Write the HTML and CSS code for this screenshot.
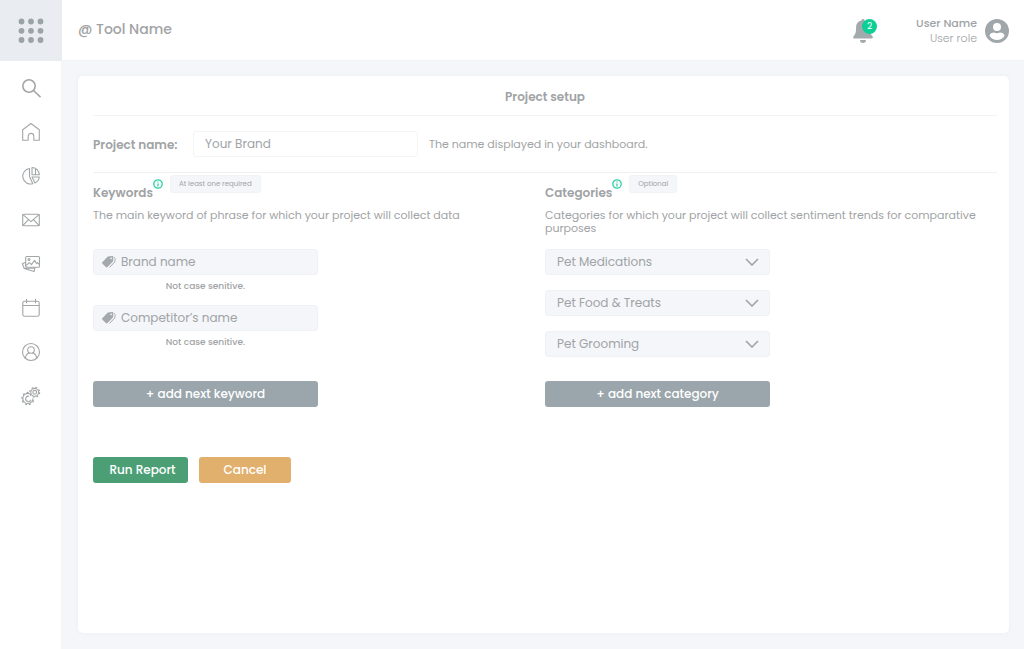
FILE: index.html
```html
<!DOCTYPE html>
<html lang="en">
<head>
<meta charset="utf-8">
<meta name="viewport" content="width=device-width, initial-scale=1">
<title>Project setup</title>
<link rel="stylesheet" href="styles.css">
</head>
<body>
<div class="app">
  <aside class="sidebar">
    <button class="apps" type="button" aria-label="Applications">
      <svg width="26" height="26" viewBox="0 0 26 26" fill="currentColor"><circle cx="3.5" cy="3.5" r="2.9"/><circle cx="13" cy="3.5" r="2.9"/><circle cx="22.500" cy="3.5" r="2.9"/><circle cx="3.5" cy="12.800" r="2.9"/><circle cx="13" cy="12.800" r="2.9"/><circle cx="22.500" cy="12.800" r="2.9"/><circle cx="3.500" cy="22" r="2.9"/><circle cx="13" cy="22" r="2.9"/><circle cx="22.500" cy="22" r="2.9"/></svg>
    </button>
    <nav class="nav" aria-label="Main">
      <a class="nav-link" href="#search" aria-label="Search"><svg class="bold" viewBox="0 0 20 20"><circle cx="8" cy="8" r="6.200"/><path d="M12.500 12.500 19 18.700"/></svg></a>
      <a class="nav-link" href="#home" aria-label="Home"><svg viewBox="0 0 20 20"><path d="M1.700 7.800 10 1.500l8.300 6.300v10.400h-5.500v-4a2.800 2.800 0 0 0-5.600 0v4H1.700z"/></svg></a>
      <a class="nav-link" href="#reports" aria-label="Reports"><svg viewBox="0 0 20 20"><path d="M8.500 2.500a7.800 7.800 0 1 0 3.300 15.200L8.500 10.600z"/><path d="M11 1.500v7.300h7.300A7.400 7.400 0 0 0 11 1.500zM11 11h7.300a7.500 7.500 0 0 1-4.300 6zM14.500 2.800v6"/></svg></a>
      <a class="nav-link" href="#mail" aria-label="Mail"><svg viewBox="0 0 20 20"><rect x="1.700" y="4.300" width="16.600" height="11.400" rx="1"/><path d="m2 4.700 8 7 8-7M2 15.400l5.500-5.700M18 15.400l-5.500-5.700"/></svg></a>
      <a class="nav-link" href="#gallery" aria-label="Gallery"><svg viewBox="0 0 20 20"><rect x="4.700" y="2.500" width="13.800" height="10.700" rx="1"/><circle cx="8" cy="5.500" r="1"/><path d="m4.900 11.700 3.500-3 2 2 3.200-4.300 2 3.300 1-1 1.800 2M4.500 8.500l-3.200 1 1.800 4.700h9.500M3.200 14.500l9.800 3 1-4"/></svg></a>
      <a class="nav-link" href="#calendar" aria-label="Calendar"><svg viewBox="0 0 20 20"><rect x="1.800" y="3.200" width="16.400" height="15" rx="1.800"/><path d="M2 7.500h16M5.500 1.200v3.500M14.500 1.200v3.500"/></svg></a>
      <a class="nav-link" href="#account" aria-label="Account"><svg viewBox="0 0 20 20"><circle cx="10" cy="10" r="8.500"/><circle cx="10" cy="8" r="3.300"/><path d="M4.400 16.300c.2-3.400 1.700-4.700 3.800-5.300M15.600 16.300c-.2-3.400-1.700-4.700-3.800-5.300"/></svg></a>
      <a class="nav-link" href="#settings" aria-label="Settings"><svg viewBox="0 0 20 20"><circle cx="13.700" cy="6.300" r="1.900"/><circle cx="13.700" cy="6.300" r="3.900"/><circle class="teeth" cx="13.700" cy="6.300" r="4.900" stroke-dasharray="1.900 1.950"/><path d="M7.800 10.200a2.700 2.700 0 1 0 1.900 4"/><path d="M8.300 7.600a5.100 5.100 0 1 0 3.700 5.200"/><path class="teeth" d="M7.600 6.500a6.100 6.100 0 1 0 5.400 6" stroke-dasharray="2 2.100"/></svg></a>
    </nav>
  </aside>
  <div class="page">
    <header class="topbar">
      <div class="tool">@ Tool Name</div>
      <button class="bell" type="button" aria-label="Notifications">
        <svg width="20" height="24" viewBox="0 0 20 24" fill="currentColor"><path d="M10 0a1.400 1.400 0 0 1 1.400 1.500c3.400.7 5.500 3.300 5.500 6.700 0 5.300.8 7.200 2.500 8.900.8.900.4 2.400-1 2.400H1.600c-1.400 0-1.800-1.500-1-2.400 1.700-1.700 2.500-3.600 2.500-8.900 0-3.400 2.100-6 5.500-6.700A1.400 1.400 0 0 1 10 0zM7 21h6a3 3 0 0 1-6 0z"/></svg>
        <span class="count">2</span>
      </button>
      <div class="user">
        <div class="user-text"><strong>User Name</strong><span>User role</span></div>
        <svg width="24" height="24" viewBox="0 0 24 24"><circle class="disc" cx="12" cy="12" r="12"/><circle class="face" cx="12" cy="8" r="4"/><path class="face" d="M4.500 17c.3-2.700 2.400-3.500 4.500-3.500 1 .5 1.900.7 3 .7s2-.2 3-.7c2.100 0 4.200.8 4.500 3.500-3.500 5.400-11.500 5.400-15 0z"/></svg>
      </div>
    </header>
    <main class="content">
      <form class="card">
        <h1 class="title">Project setup</h1>
        <div class="project">
          <label for="project-name">Project name:</label>
          <input class="box plain" id="project-name" type="text" placeholder="Your Brand">
          <p class="note">The name displayed in your dashboard.</p>
        </div>
        <div class="columns">
          <section class="column">
            <div class="heading">
              <h2>Keywords</h2>
              <svg class="info" viewBox="0 0 10 10"><circle cx="5" cy="5" r="4.200"/><path d="M5 4.400v3M5 2.400v1"/></svg>
              <span class="tip">At least one required</span>
            </div>
            <p class="desc">The main keyword of phrase for which your project will collect data</p>
            <div class="fields">
              <div class="field">
                <div class="tagged"><svg class="tag" viewBox="0 0 14 12"><path class="fill" d="M5.800.5 10.600 0l.8.800-.3 4.500-5.600 5.800a1.200 1.200 0 0 1-1.700 0L.5 7.700a1.200 1.200 0 0 1 0-1.700z"/><path class="line" d="M12.200 1.200c.8.800 1 1.300.9 2.300l-.3 2.400-5.300 5.500"/><circle class="hole" cx="9.200" cy="2.400" r=".8"/></svg><input class="box" id="brand" type="text" placeholder="Brand name" aria-label="Brand name" aria-describedby="brand-hint"></div>
                <p class="hint" id="brand-hint">Not case senitive.</p>
              </div>
              <div class="field">
                <div class="tagged"><svg class="tag" viewBox="0 0 14 12"><path class="fill" d="M5.800.5 10.600 0l.8.800-.3 4.500-5.600 5.800a1.200 1.200 0 0 1-1.700 0L.5 7.700a1.200 1.200 0 0 1 0-1.700z"/><path class="line" d="M12.200 1.200c.8.800 1 1.300.9 2.300l-.3 2.400-5.300 5.500"/><circle class="hole" cx="9.200" cy="2.400" r=".8"/></svg><input class="box" id="competitor" type="text" placeholder="Competitor’s name" aria-label="Competitor’s name" aria-describedby="competitor-hint"></div>
                <p class="hint" id="competitor-hint">Not case senitive.</p>
              </div>
            </div>
            <button class="btn add" type="button">+ add next keyword</button>
          </section>
          <section class="column">
            <div class="heading">
              <h2>Categories</h2>
              <svg class="info" viewBox="0 0 10 10"><circle cx="5" cy="5" r="4.200"/><path d="M5 4.400v3M5 2.400v1"/></svg>
              <span class="tip">Optional</span>
            </div>
            <p class="desc">Categories for which your project will collect sentiment trends for comparative purposes</p>
            <div class="fields selects">
              <div class="picker"><select class="box" aria-label="Category 1"><option>Pet Medications</option></select><svg viewBox="0 0 14 8"><path d="m1 1 6 6 6-6"/></svg></div>
              <div class="picker"><select class="box" aria-label="Category 2"><option>Pet Food &amp; Treats</option></select><svg viewBox="0 0 14 8"><path d="m1 1 6 6 6-6"/></svg></div>
              <div class="picker"><select class="box" aria-label="Category 3"><option>Pet Grooming</option></select><svg viewBox="0 0 14 8"><path d="m1 1 6 6 6-6"/></svg></div>
            </div>
            <button class="btn add" type="button">+ add next category</button>
          </section>
        </div>
        <div class="actions">
          <button class="btn run" type="submit">Run Report</button>
          <button class="btn cancel" type="button">Cancel</button>
        </div>
      </form>
    </main>
  </div>
</div>
</body>
</html>
```
FILE: styles.css
```css
* { box-sizing: border-box; }
body { margin: 0; color: #a0a3a5; font: 11px/13px Poppins, Inter, sans-serif; }
h1, h2, p { margin: 0; }
button, input, select { font: inherit; color: inherit; margin: 0; }
button { border: 0; padding: 0; cursor: pointer; }
svg { display: block; flex: none; }

.app { display: flex; min-height: 100vh; background: #f4f6f9; }
.sidebar { width: 62px; flex: none; background: #fff; border-right: 1px solid #f4f5f7; }
.apps { display: grid; place-items: center; width: 62px; height: 61px; background: #e9edf2; color: #9ba3a8; }
.nav { display: flex; flex-direction: column; align-items: center; gap: 24px; padding-top: 17px; }
.nav-link { display: block; color: #a3a6a8; }
.nav-link svg { width: 20px; height: 20px; fill: none; stroke: currentColor; stroke-width: 1.1; stroke-linejoin: round; stroke-linecap: round; }
.nav-link svg.bold { stroke-width: 1.6; }
.nav-link svg .teeth { stroke-width: 1.2; stroke-linecap: butt; }

.page { flex: 1; min-width: 0; display: flex; flex-direction: column; }
.topbar { display: flex; align-items: center; height: 61px; padding: 1px 15px 0 16px; background: #fff; border-bottom: 1px solid #f0f2f4; }
.tool { margin-right: auto; padding-bottom: 4px; font-size: 14px; line-height: 18px; font-weight: 500; }
.bell { position: relative; margin-right: 43px; background: none; color: #a3aaad; }
.count { position: absolute; top: 0; right: -4px; width: 15px; height: 15px; border-radius: 50%; background: #0bcf94; color: #fff; font-size: 9px; line-height: 15px; text-align: center; }
.user { display: flex; align-items: center; gap: 8px; }
.user-text { display: flex; flex-direction: column; text-align: right; line-height: 15px; }
.user-text strong { font-weight: 500; }
.user-text span { font-weight: 300; }
.disc { fill: #a0a7aa; }
.face { fill: #fff; }

.content { flex: 1; display: flex; padding: 15px 15px 16px 16px; }
.card { flex: 1; padding: 0 12px 24px 15px; border-radius: 5px; background: #fff; box-shadow: 0 0 4px #eceff3; }
.title { padding: 12px 0 10px; border-bottom: 1px solid #f2f3f4; font-size: 12px; line-height: 17px; font-weight: 600; text-align: center; }
.project { display: flex; align-items: center; padding: 15px 0; border-bottom: 1px solid #f0f1f2; }
.project label { width: 100px; font-size: 12px; font-weight: 600; white-space: nowrap; }
.note { margin-left: 11px; }

.box { display: block; width: 225px; height: 26px; padding: 0 11px; border: 1px solid #eff1f4; border-radius: 3px; background: #f4f6f9; font-size: 12px; line-height: 18px; outline-color: #9aa6ac; }
.box::placeholder { color: inherit; opacity: 1; }
.box.plain { background: #fff; border-color: #f3f4f5; }

.columns { display: grid; grid-template-columns: 1fr 1fr; }
.heading { display: flex; align-items: flex-start; height: 36px; padding-top: 2px; }
.heading h2 { padding-top: 10px; font-size: 12px; line-height: 16px; font-weight: 600; }
.info { width: 10px; height: 10px; margin-top: 4px; fill: none; stroke: #2fcfa5; stroke-width: 1.3; }
.tip { margin-left: 7px; padding: 0 8px; border: 1px solid #f0f2f4; border-radius: 3px; background: #f4f6f9; font-size: 7px; line-height: 16px; }
.desc { min-height: 26px; padding-right: 12px; }
.fields { min-height: 132px; margin-top: 14px; }
.field + .field { margin-top: 12px; }
.tagged, .picker { position: relative; width: 225px; }
.tagged .box { padding-left: 27px; }
.tag { position: absolute; left: 9px; top: 7px; width: 14px; height: 12px; }
.tag .fill { fill: #a3a9ad; }
.tag .line { fill: none; stroke: #a3a9ad; }
.tag .hole { fill: #f4f6f9; }
.hint { width: 225px; padding-top: 5px; font-size: 9px; line-height: 13px; font-weight: 500; text-align: center; }
.selects { display: flex; flex-direction: column; gap: 15px; }
.picker .box { appearance: none; padding-right: 32px; }
.picker svg { position: absolute; right: 11px; top: 9px; width: 14px; height: 8px; fill: none; stroke: #a0a4a7; stroke-width: 1.6; pointer-events: none; }

.btn { height: 26px; padding-bottom: 2px; border-radius: 3px; color: #fff; font-size: 12px; font-weight: 500; }
.add { width: 225px; background: #9aa6ac; }
.actions { display: flex; gap: 11px; margin-top: 50px; }
.run { width: 95px; padding-left: 4px; background: #4c9f75; }
.cancel { width: 92px; background: #e1b06d; }
```
